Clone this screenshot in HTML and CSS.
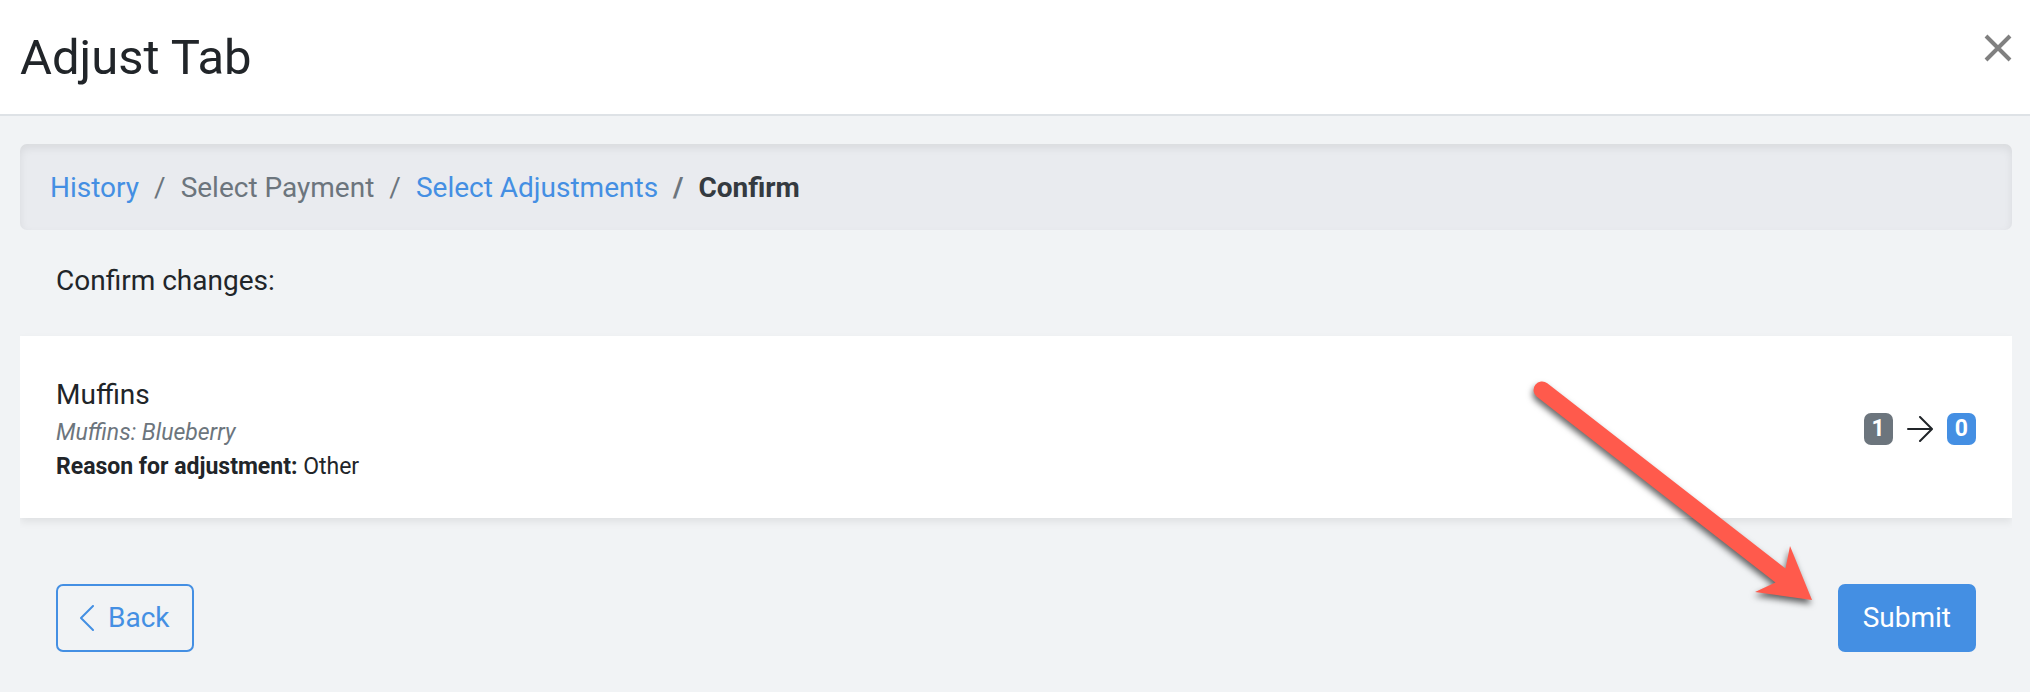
FILE: index.html
```html
<!DOCTYPE html>
<html lang="en">
<head>
<meta charset="utf-8">
<meta name="viewport" content="width=device-width, initial-scale=1">
<title>Adjust Tab</title>
<link rel="stylesheet" href="styles.css">
</head>
<body>
<header class="header">
  <h1 class="title">Adjust Tab</h1>
  <button class="close" type="button" aria-label="Close">
    <svg viewBox="0 0 28 28" width="28" height="28" fill="none" stroke="#808080" stroke-width="4"><path d="M2 2 26 26M26 2 2 26"/></svg>
  </button>
</header>
<main class="content">
  <nav class="breadcrumb" aria-label="Breadcrumb">
    <ol class="crumbs">
      <li class="crumb"><a href="#">History</a></li>
      <li class="crumb">Select Payment</li>
      <li class="crumb"><a href="#">Select Adjustments</a></li>
      <li class="crumb current" aria-current="page"><span>Confirm</span></li>
    </ol>
  </nav>
  <p class="prompt">Confirm changes:</p>
  <section class="card">
    <div class="item">
      <h2 class="name">Muffins</h2>
      <p class="variant">Muffins: Blueberry</p>
      <p class="reason"><strong>Reason for adjustment:</strong> Other</p>
    </div>
    <div class="change">
      <span class="badge">1</span>
      <svg class="to" viewBox="0 0 26 26" width="26" height="26" fill="none" stroke="#212529" stroke-width="2" stroke-linecap="round" stroke-linejoin="round"><path d="M1 13H24.500M13 1 25 13 13 25"/></svg>
      <span class="badge new">0</span>
    </div>
  </section>
  <footer class="actions">
    <button class="button back" type="button">
      <svg viewBox="0 0 14 26" width="14" height="26" fill="none" stroke="currentColor" stroke-width="2" stroke-linecap="round" stroke-linejoin="round"><path d="M13 1 1 13 13 25"/></svg>
      Back
    </button>
    <div class="submit-area">
      <svg class="pointer" viewBox="0 0 320 260" width="320" height="260" aria-hidden="true"><path fill="#ff5a4c" d="M27.300 23.300 265.500 208.500 270 186 292 240 235 232 255.500 222.500 16.900 36.800A8.500 8.500 0 0 1 27.300 23.300Z"/></svg>
      <button class="button submit" type="submit">Submit</button>
    </div>
  </footer>
</main>
</body>
</html>
```
FILE: styles.css
```css
* {
  box-sizing: border-box;
}

body {
  margin: 0;
  min-height: 100vh;
  background: #f1f3f5;
  color: #212529;
  font-family: Roboto, "Liberation Sans", sans-serif;
  font-size: 28px;
  line-height: 44px;
}

h1, h2, p, ol {
  margin: 0;
  padding: 0;
  font-weight: 400;
}

button {
  font: inherit;
  cursor: pointer;
}

svg {
  display: block;
}

a {
  color: #448fe3;
  text-decoration: none;
}

.header {
  display: flex;
  justify-content: space-between;
  align-items: flex-start;
  padding: 28px 18px 26px 20px;
  background: #fff;
  border-bottom: 2px solid #dee2e6;
}

.title {
  font-size: 49px;
  line-height: 60px;
}

.close {
  padding: 6px 0;
  border: 0;
  background: none;
}

.content {
  padding: 28px 18px 40px 20px;
}

.breadcrumb {
  padding: 22px 30px 20px;
  border-radius: 7px;
  background: #e9ebef;
  box-shadow: inset 0 4px 8px rgba(0, 0, 0, 0.075);
}

.crumbs {
  display: flex;
  flex-wrap: wrap;
  list-style: none;
  color: #6c757d;
}

.crumb + .crumb::before {
  content: "/";
  padding: 0 15px;
}

.current {
  font-weight: 700;
}

.current span {
  color: #343a40;
}

.prompt {
  padding: 29px 36px 33px;
}

.card {
  display: flex;
  justify-content: space-between;
  align-items: center;
  padding: 38px 36px 34px;
  background: #fff;
  box-shadow: 0 4px 8px rgba(0, 0, 0, 0.075);
  clip-path: inset(-12px 0);
}

.name {
  font-size: 28px;
  line-height: 42px;
}

.variant,
.reason {
  font-size: 23px;
  line-height: 34px;
}

.variant {
  color: #6c757d;
  font-style: italic;
}

.change {
  display: flex;
  align-items: center;
  gap: 14px;
}

.badge {
  padding: 0 8px;
  border-radius: 7px;
  background: #6c757d;
  color: #fff;
  font-size: 23px;
  font-weight: 700;
  line-height: 32px;
}

.new {
  background: #448fe3;
}

.actions {
  display: flex;
  justify-content: space-between;
  padding: 66px 36px 0;
}

.button {
  display: flex;
  align-items: center;
  gap: 14px;
  padding: 10px 22px;
  border: 2px solid #448fe3;
  border-radius: 7px;
  background: none;
  color: #448fe3;
}

.submit {
  padding: 10px 23px;
  background: #448fe3;
  color: #fff;
}

.submit-area {
  position: relative;
}

.pointer {
  position: absolute;
  right: 136px;
  bottom: 32px;
  filter: drop-shadow(-1px 4px 3px rgba(0, 0, 0, 0.6));
  pointer-events: none;
}
```
